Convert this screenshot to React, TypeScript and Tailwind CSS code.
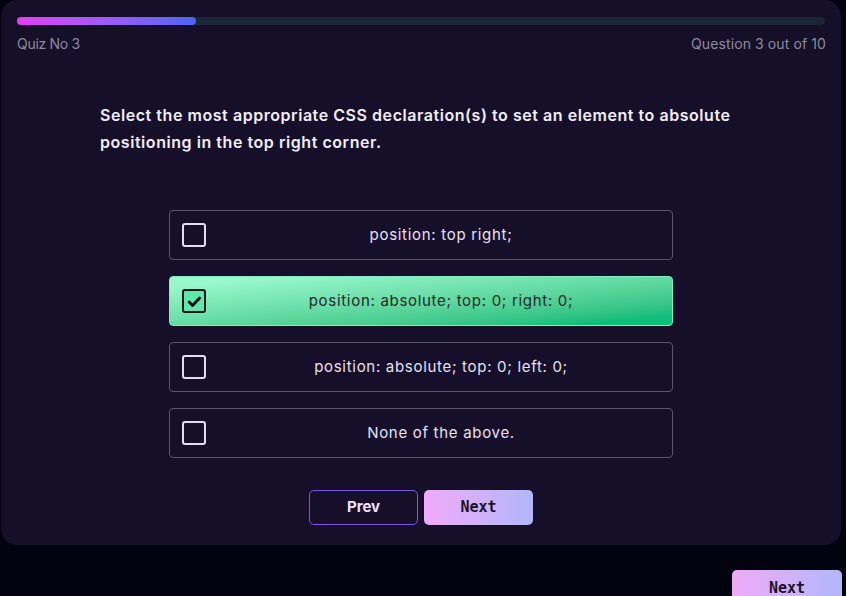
import { useState } from 'react';

const options = [
  'position: top right;',
  'position: absolute; top: 0; right: 0;',
  'position: absolute; top: 0; left: 0;',
  'None of the above.',
];

function CheckBox({ checked }: { checked: boolean }) {
  if (checked) {
    return (
      <span className="flex h-6 w-6 shrink-0 items-center justify-center rounded-[3px] border-2 border-[#10141c] bg-[#5ce9ab]">
        <svg viewBox="0 0 16 16" className="h-[17px] w-[17px]" fill="none" stroke="#0d1117" strokeWidth="2.8" strokeLinecap="round" strokeLinejoin="round">
          <path d="M3 8.5l3.2 3.2 6.6-7" />
        </svg>
      </span>
    );
  }
  return <span className="h-6 w-6 shrink-0 rounded-[3px] border-2 border-[#e6daf5]" />;
}

export default function App() {
  const [selected, setSelected] = useState(1);

  return (
    <div className="relative h-[596px] w-[846px] overflow-hidden bg-[#03030f] font-['Inter',sans-serif]">
      <div className="ml-[1px] h-[545px] w-[840px] rounded-2xl bg-[#150f2a] px-4 pt-[17px]">
        {/* progress */}
        <div className="h-2 w-full rounded-full bg-[#1b2535]">
          <div className="h-2 w-[179px] rounded-full bg-gradient-to-r from-[#e040f0] to-[#4a63f7]" />
        </div>
        <div className="mt-[9px] flex justify-between text-[14px] leading-5 text-[#8d8a9c]">
          <span className="tracking-[-0.3px]">Quiz No 3</span>
          <span className="mr-[-1px] tracking-[0.1px]">Question 3 out of 10</span>
        </div>

        <p className="mx-auto mt-[48px] w-[642px] text-[16px] font-semibold leading-[27px] tracking-[0.55px] text-[#f2eef8]">
          Select the most appropriate CSS declaration(s) to set an element to absolute positioning in the top right corner.
        </p>

        <div className="mx-auto mt-[54px] flex w-[504px] flex-col gap-4">
          {options.map((opt, i) => {
            const active = selected === i;
            return (
              <button
                key={opt}
                onClick={() => setSelected(i)}
                className={
                  active
                    ? 'relative flex h-[50px] items-center rounded-[4px] border border-[#7cf0bf] bg-gradient-to-br from-[#98f8cc] from-10% to-[#10bd7b] to-90% px-3 text-left'
                    : 'relative flex h-[50px] items-center rounded-[4px] border border-[#5b5470] px-3 text-left'
                }
              >
                <CheckBox checked={active} />
                <span
                  className={
                    active
                      ? 'absolute inset-x-0 pl-[40px] text-center text-[15px] tracking-[0.7px] text-[#1b2a2a]'
                      : 'absolute inset-x-0 pl-[40px] text-center text-[15px] tracking-[0.7px] text-[#e8e0f4]'
                  }
                >
                  {opt}
                </span>
              </button>
            );
          })}
        </div>

        <div className="mt-[32px] flex justify-center gap-[6px]">
          <button className="h-[35px] w-[109px] rounded-[5px] border border-[#8450e8] text-[15px] font-bold text-[#ece2fb]">
            Prev
          </button>
          <button className="h-[35px] w-[109px] rounded-[5px] bg-gradient-to-r from-[#f0aaf9] to-[#b0b6fb] font-['DejaVu_Sans_Mono',monospace] text-[15px] font-bold text-[#1a1428]">
            Next
          </button>
        </div>
      </div>

      <button className="absolute left-[732px] top-[570px] h-[36px] w-[110px] rounded-[5px] bg-gradient-to-r from-[#f0aaf9] to-[#b0b6fb] font-['DejaVu_Sans_Mono',monospace] text-[15px] font-bold text-[#1a1428]">
        Next
      </button>
    </div>
  );
}
